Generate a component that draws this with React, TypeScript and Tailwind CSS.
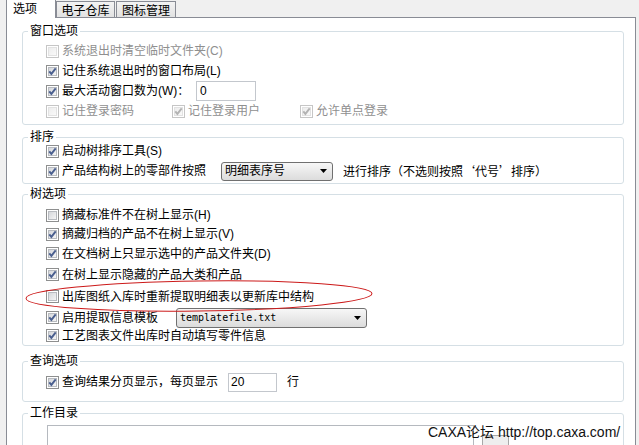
import React from 'react';

function CheckBox({ checked, disabled }: { checked?: boolean; disabled?: boolean }) {
  const gid = disabled ? 'cb-grad-d' : 'cb-grad';
  return (
    <svg width="13" height="13" viewBox="0 0 13 13" className="shrink-0">
      <defs>
        <linearGradient id={gid} x1="0" y1="0" x2="1" y2="1">
          <stop offset="0" stopColor={disabled ? '#ececec' : '#d3d5d9'} />
          <stop offset="1" stopColor={disabled ? '#fafafa' : '#f7f7f7'} />
        </linearGradient>
      </defs>
      <rect x="0.5" y="0.5" width="12" height="12" fill="#fff" stroke={disabled ? '#c6c6c6' : '#8e8f8f'} />
      <rect x="2.5" y="2.5" width="8" height="8" fill={`url(#${gid})`} stroke={disabled ? '#e2e2e2' : '#b8bbc0'} />
      {checked && (
        <path
          d="M3.3 6.3 L5.4 8.9 L9.7 3.4"
          fill="none"
          stroke={disabled ? '#b3b3b3' : '#4a5f8f'}
          strokeWidth="1.9"
        />
      )}
    </svg>
  );
}

function Check({
  label,
  checked,
  disabled,
  className = '',
}: {
  label: string;
  checked?: boolean;
  disabled?: boolean;
  className?: string;
}) {
  return (
    <label className={`flex shrink-0 items-center ${className}`}>
      <CheckBox checked={checked} disabled={disabled} />
      <span className={`ml-[3px] whitespace-nowrap ${disabled ? 'text-[#8f8f8f]' : 'text-black'}`}>{label}</span>
    </label>
  );
}

function Combo({ value, className = '', mono }: { value: string; className?: string; mono?: boolean }) {
  return (
    <div
      className={`flex shrink-0 items-center justify-between rounded-[3px] border border-[#707070] bg-linear-to-b from-[#f7f7f7] to-[#dcdcdc] pl-[3px] pr-[5px] ${className}`}
    >
      <span className={mono ? "font-['DejaVu_Sans_Mono',monospace] text-[10px]" : ''}>{value}</span>
      <svg width="7" height="4" viewBox="0 0 7 4">
        <path d="M0 0h7L3.5 4z" fill="#000" />
      </svg>
    </div>
  );
}

function Group({ title, className = '', children }: { title: string; className?: string; children: React.ReactNode }) {
  return (
    <fieldset className={`w-[602px] rounded-[3px] border border-[#d5dfe5] ${className}`}>
      <legend className="ml-[5px] px-[2px] leading-[14px]">{title}</legend>
      {children}
    </fieldset>
  );
}

export default function App() {
  return (
    <div className="relative h-[445px] w-[639px] overflow-hidden bg-[#f0f0f0] font-['Liberation_Sans','Noto_Sans_CJK_SC',sans-serif] text-[12px] leading-[14px] text-black">
      <div className="pl-[6px]">
        {/* Tabs */}
        <div className="flex h-[17px] items-start">
          <div className="relative z-10 flex h-[18px] w-[50px] items-center border-x border-[#898c95] bg-white pl-[6px]">
            选项
          </div>
          <div className="mt-[1px] flex h-[16px] w-[59px] items-center justify-center border-x border-t border-[#898c95] bg-linear-to-b from-[#f3f3f3] to-[#e2e2e2] pt-[2px]">
            电子仓库
          </div>
          <div className="ml-[1px] mt-[1px] flex h-[16px] w-[60px] items-center justify-center border-x border-t border-[#898c95] bg-linear-to-b from-[#f3f3f3] to-[#e2e2e2] pt-[2px]">
            图标管理
          </div>
        </div>

        {/* Panel */}
        <div className="h-[440px] w-[630px] border border-[#898c95] bg-white pl-[15px]">
          <Group title="窗口选项" className="mt-[6px] h-[101px]">
            <div className="pl-[23px] pt-[3px]">
              <div className="flex h-[20px] items-center">
                <Check disabled label="系统退出时清空临时文件夹(C)" />
              </div>
              <div className="flex h-[20px] items-center">
                <Check checked label="记住系统退出时的窗口布局(L)" />
              </div>
              <div className="flex h-[20px] items-center">
                <Check checked label="最大活动窗口数为(W)：" className="w-[150px]" />
                <div className="flex h-[20px] w-[60px] items-center border border-[#c3c7cd] pl-[3px]">0</div>
              </div>
              <div className="flex h-[20px] items-center">
                <Check disabled label="记住登录密码" className="w-[126px]" />
                <Check disabled checked label="记住登录用户" className="w-[128px]" />
                <Check disabled checked label="允许单点登录" />
              </div>
            </div>
          </Group>

          <Group title="排序" className="mt-[5px] h-[54px]">
            <div className="-mt-[3px] pl-[23px]">
              <div className="flex h-[20px] items-center">
                <Check checked label="启动树排序工具(S)" />
              </div>
              <div className="flex h-[20px] items-center">
                <Check checked label="产品结构树上的零部件按照" className="w-[175px]" />
                <Combo value="明细表序号" className="h-[19px] w-[112px]" />
                <span lang="zh-CN" className="ml-[10px] whitespace-nowrap font-['Noto_Sans_CJK_SC',sans-serif]">
                  进行排序（不选则按照‘代号’排序）
                </span>
              </div>
            </div>
          </Group>

          <Group title="树选项" className="mt-[3px] h-[159px]">
            <div className="pl-[23px] pt-[4px]">
              <div className="flex h-[20px] items-center">
                <Check label="摘藏标准件不在树上显示(H)" />
              </div>
              <div className="flex h-[18px] items-center">
                <Check checked label="摘藏归档的产品不在树上显示(V)" />
              </div>
              <div className="flex h-[21px] items-center">
                <Check checked label="在文档树上只显示选中的产品文件夹(D)" />
              </div>
              <div className="flex h-[21px] items-center">
                <Check checked label="在树上显示隐藏的产品大类和产品" />
              </div>
              <div className="flex h-[23px] items-center">
                <Check label="出库图纸入库时重新提取明细表以更新库中结构" />
              </div>
              <div className="flex h-[19px] items-center">
                <Check checked label="启用提取信息模板" className="w-[130px]" />
                <Combo value="templatefile.txt" mono className="h-[20px] w-[191px]" />
              </div>
              <div className="flex h-[17px] items-center">
                <Check checked label="工艺图表文件出库时自动填写零件信息" />
              </div>
            </div>
          </Group>

          <Group title="查询选项" className="mt-[8px] h-[48px]">
            <div className="pl-[23px] pt-[4px]">
              <div className="flex h-[20px] items-center">
                <Check checked label="查询结果分页显示，每页显示" className="w-[182px]" />
                <div className="flex h-[19px] w-[49px] items-center border border-[#c3c7cd] pl-[2px]">20</div>
                <span className="ml-[10px]">行</span>
              </div>
            </div>
          </Group>

          <Group title="工作目录" className="mt-[4px] h-[80px]">
            <div className="flex items-start pl-[24px] pt-[5px]">
              <div className="h-[40px] w-[427px] border border-[#b5b9bf]" />
              <div className="ml-[8px] mt-[10px] flex h-[22px] w-[27px] items-start justify-center rounded-[2px] border border-[#a8a8a8] bg-[#eeeeee] text-[#555]">
                ...
              </div>
            </div>
          </Group>
        </div>
      </div>

      {/* red annotation ellipse */}
      <svg className="pointer-events-none absolute left-0 top-0" width="639" height="445" viewBox="0 0 639 445">
        <ellipse cx="199" cy="296" rx="173" ry="15" fill="none" stroke="#cc1a1a" strokeWidth="1" transform="rotate(-0.8 199 296)" />
      </svg>

      {/* watermark */}
      <div className="pointer-events-none absolute left-[428px] top-[424px] whitespace-nowrap text-[14px] leading-[17px] text-[#111]">
        CAXA论坛 http://top.caxa.com/
      </div>
    </div>
  );
}
